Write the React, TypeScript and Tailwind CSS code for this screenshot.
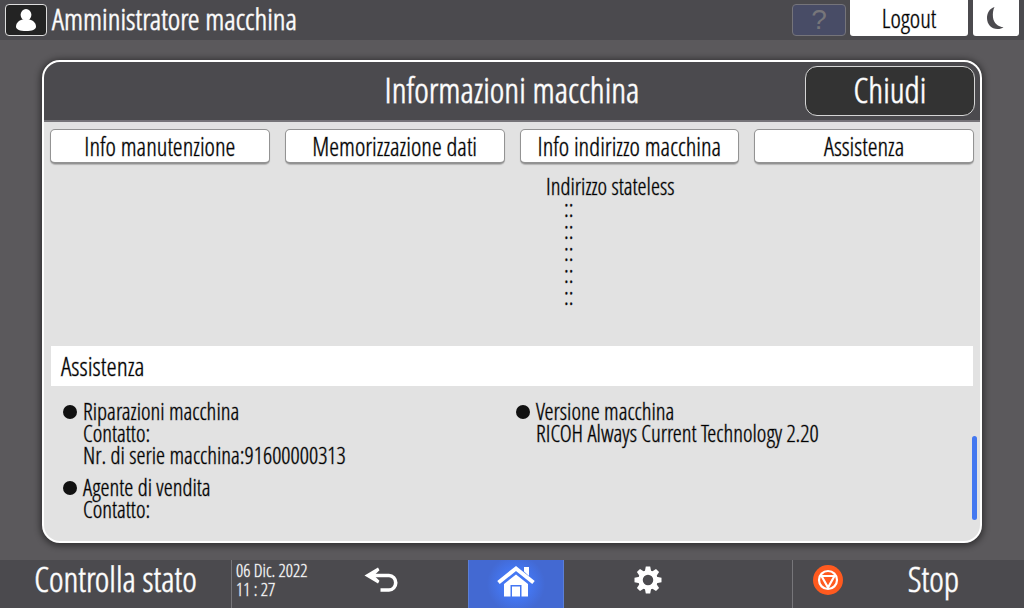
import type { ReactNode } from 'react';

const tabs = ['Info manutenzione', 'Memorizzazione dati', 'Info indirizzo macchina', 'Assistenza'];

const statelessAddresses = ['::', '::', '::', '::', '::'];

function InfoItem({ title, children }: { title: string; children?: ReactNode }) {
  return (
    <li className="flex gap-[6px]">
      <span className="mt-[5px] h-[14px] w-[14px] shrink-0 rounded-full bg-[#111111]" />
      <div>
        <h3>{title}</h3>
        {children}
      </div>
    </li>
  );
}

function UserIcon() {
  return (
    <svg className="h-6 w-6" viewBox="0 0 24 24" fill="white" aria-hidden="true">
      <ellipse cx="12" cy="6.8" rx="5.4" ry="5.8" />
      <path d="M8.500 11.500C4.500 12.500 2 15.500 2 18.700C2 21.500 6 23 12 23s10-1.500 10-4.300c0-3.200-2.500-6.200-6.500-7.200z" />
    </svg>
  );
}

function MoonIcon() {
  return (
    <svg className="h-6 w-6" viewBox="0 0 24 24" fill="#4b4a4e" aria-hidden="true">
      <path d="M10.500 1C5.500 2.500 3 7 3 12c0 6.500 4.500 11 10.500 11 2.700 0 4.500-.6 6-1.800C14 21 9.700 17 9 11.500 8.600 7.500 9 4 10.500 1z" />
    </svg>
  );
}

function BackIcon() {
  return (
    <svg className="h-[26px] w-[34px]" viewBox="0 0 34 26" fill="none" aria-hidden="true">
      <path d="M8 8.500h17a6.500 7 0 0 1 0 14.500H16.500" stroke="white" strokeWidth="3.600" />
      <path d="M0.500 8.500L14 0.500l1.500 2.800-5.500 5.200 5.500 5.200-1.500 2.800z" fill="white" />
    </svg>
  );
}

function HomeIcon() {
  return (
    <svg className="h-8 w-[38px]" viewBox="0 0 38 32" aria-hidden="true">
      <path d="M27 2h5v9l-5-4.500z" fill="white" />
      <path d="M1.500 17.500L19 3.500 36.500 17.500" fill="none" stroke="white" strokeWidth="4" />
      <path d="M19 9.500l12 9.500v12.500h-6.500V20h-11v11.500H7V19z" fill="white" />
      <path d="M15 21.500h8v10h-8z" fill="white" />
    </svg>
  );
}

function GearIcon() {
  const teeth = [0, 45, 90, 135, 180, 225, 270, 315];
  return (
    <svg className="h-7 w-7" viewBox="0 0 28 28" aria-hidden="true">
      {teeth.map((angle) => (
        <path key={angle} d="M10.800 5.500l1-5h4.400l1 5z" fill="white" transform={`rotate(${angle} 14 14)`} />
      ))}
      <circle cx="14" cy="14" r="7.500" fill="none" stroke="white" strokeWidth="4.500" />
    </svg>
  );
}

function StopIcon() {
  return (
    <svg className="h-[30px] w-[30px]" viewBox="0 0 30 30" fill="none" aria-hidden="true">
      <circle cx="15" cy="15" r="15" fill="#ff5a1f" />
      <circle cx="15" cy="15" r="9" stroke="white" strokeWidth="2.200" />
      <path d="M8.500 11h13L15 22.500z" stroke="white" strokeWidth="2.200" strokeLinejoin="round" />
    </svg>
  );
}

export default function App() {
  return (
    <div className="flex min-h-screen flex-col bg-[#5b595c] font-['Open_Sans_Condensed_Light','Liberation_Sans_Narrow','Liberation_Sans',sans-serif] font-light text-black [-webkit-text-stroke:1px_rgba(0,0,0,0.35)]">
      <header className="flex h-10 items-start justify-between bg-[#4b4a4e] pr-[5px] pl-[5px]">
        <div className="flex h-10 items-center gap-[5px]">
          <span className="flex h-8 w-[42px] items-center justify-center rounded-[4px] border border-[#dddddd] bg-[#232323]">
            <UserIcon />
          </span>
          <span className="pb-[2px] text-[30px] leading-[38px] text-white [-webkit-text-stroke:1px_rgba(255,255,255,0.7)]">
            Amministratore macchina
          </span>
        </div>
        <div className="flex items-start gap-1">
          <button className="mt-1 h-8 w-[54px] rounded-[4px] border border-[#75747a] bg-[#484c66] font-['Liberation_Sans',sans-serif] text-[28px] leading-7 text-[#77767a] [-webkit-text-stroke:0]">
            ?
          </button>
          <button className="h-9 w-[118px] rounded-b-[3px] bg-white text-[25px] leading-9">Logout</button>
          <button aria-label="Risparmio energia" className="ml-px flex h-9 w-[46px] items-center justify-center rounded-b-[3px] bg-white">
            <MoonIcon />
          </button>
        </div>
      </header>

      <main className="flex flex-1 flex-col px-[42px] pt-5 pb-[17px]">
        <section className="flex flex-1 flex-col overflow-hidden rounded-[18px] border-2 border-white bg-[#e2e2e2] shadow-[0_1px_6px_2px_rgba(0,0,0,0.45)]">
          <div className="grid h-[60px] grid-cols-[1fr_auto_1fr] items-center border-b-2 border-[#757378] bg-[#4b4a4e] pr-[5px] pl-[5px] text-white [-webkit-text-stroke:1px_rgba(255,255,255,0.7)]">
            <h1 className="col-start-2 pb-[2px] text-[35px] leading-10">Informazioni macchina</h1>
            <button className="h-[50px] w-[170px] justify-self-end rounded-[12px] border border-[#d5d5d5] bg-[#333333] pb-[2px] text-[35px] leading-10">
              Chiudi
            </button>
          </div>

          <nav className="grid grid-cols-4 gap-[15px] px-[6px] pt-[7px]">
            {tabs.map((tab) => (
              <button
                key={tab}
                className="h-[35px] rounded-[5px] border border-b-2 border-[#939393] bg-white text-[25px] leading-8 whitespace-nowrap shadow-[0_1px_1px_rgba(0,0,0,0.2)]"
              >
                {tab}
              </button>
            ))}
          </nav>

          <div className="relative flex-1 px-[7px] text-[23px] leading-[22px]">
            <div className="grid h-[182px] grid-cols-[453fr_469fr] pt-[11px]">
              <div className="col-start-2 pl-[42px]">
                <h3>Indirizzo stateless</h3>
                <ul className="pl-[18px]">
                  {statelessAddresses.map((address, i) => (
                    <li key={i}>{address}</li>
                  ))}
                </ul>
              </div>
            </div>

            <h2 className="h-10 bg-white px-[10px] text-[26px] leading-10">Assistenza</h2>

            <div className="grid grid-cols-[453fr_469fr] pt-[14px]">
              <ul className="flex flex-col gap-[10px] pl-3">
                <InfoItem title="Riparazioni macchina">
                  <p>Contatto:</p>
                  <p>Nr. di serie macchina:91600000313</p>
                </InfoItem>
                <InfoItem title="Agente di vendita">
                  <p>Contatto:</p>
                </InfoItem>
              </ul>
              <ul className="pl-3">
                <InfoItem title="Versione macchina">
                  <p>RICOH Always Current Technology 2.20</p>
                </InfoItem>
              </ul>
            </div>

            <span className="absolute right-[3px] bottom-[21px] h-[84px] w-[5px] rounded-full bg-[#4478f0]" />
          </div>
        </section>
      </main>

      <footer className="grid h-12 grid-cols-[231fr_81fr_156fr_96fr_228fr_232fr] bg-[#4b4a4e] text-white [-webkit-text-stroke:1px_rgba(255,255,255,0.7)]">
        <button className="pb-[10px] text-[35px] leading-[38px]">Controlla stato</button>
        <div className="border-l border-[#77767a] pt-px pl-1 text-[18px] leading-[19px] whitespace-nowrap [-webkit-text-stroke:1px_rgba(255,255,255,0.35)]">
          <p>06 Dic. 2022</p>
          <p>11 : 27</p>
        </div>
        <button aria-label="Indietro" className="flex items-center justify-center pr-[18px] pb-2">
          <BackIcon />
        </button>
        <button
          aria-label="Home"
          className="flex items-center justify-center border-x border-[#5b7fd6] bg-[radial-gradient(circle_at_50%_50%,#4477f3_25%,#4369d2_55%)] pb-[6px]"
        >
          <HomeIcon />
        </button>
        <button aria-label="Impostazioni" className="flex items-center justify-center pr-[60px] pb-2">
          <GearIcon />
        </button>
        <button className="grid grid-cols-[70fr_142fr_20fr] items-center border-l border-[#77767a] pb-2 text-[35px] leading-10">
          <span className="flex justify-center">
            <StopIcon />
          </span>
          <span className="pb-[2px] leading-[38px]">Stop</span>
        </button>
      </footer>
    </div>
  );
}
